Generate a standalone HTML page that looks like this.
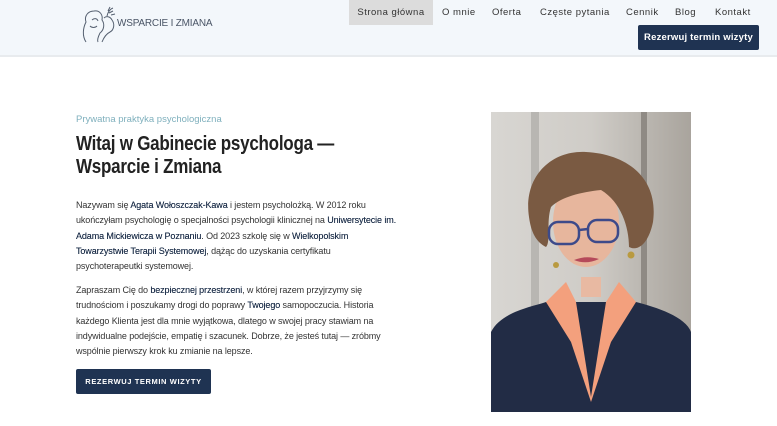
<!DOCTYPE html>
<html><head><meta charset="utf-8"><style>
*{margin:0;padding:0;box-sizing:border-box}
body{width:777px;height:426px;overflow:hidden;background:#fff;font-family:"Liberation Sans",sans-serif;position:relative}
.hdr{position:absolute;left:0;top:0;width:777px;height:57px;background:#f3f7fb;border-bottom:2px solid #e8ebee}
.logo{position:absolute;left:80px;top:6px}
.logotxt{position:absolute;left:117px;top:18px;font-size:10px;color:#4a5566;letter-spacing:-0.2px;white-space:nowrap}
.nav div{position:absolute;top:0;height:25px;line-height:25px;font-size:9.5px;color:#333;letter-spacing:0.5px;white-space:nowrap}
.nav .act{background:#dcdcdc;left:349px;width:84px;text-align:center}
.btn1{position:absolute;left:638px;top:25px;width:121px;height:25px;background:#1f3352;color:#fff;font-size:9.5px;font-weight:bold;border-radius:2px;text-align:center;line-height:25px;letter-spacing:0.2px;white-space:nowrap}
.sub{position:absolute;left:76px;top:114px;font-size:9.5px;color:#7fb0bd}
h1{position:absolute;left:76px;top:132px;font-size:20.5px;line-height:23px;color:#222;font-weight:bold;letter-spacing:-0.3px;transform:scaleX(0.83);transform-origin:left;white-space:nowrap}
.p{position:absolute;left:76px;font-size:9px;line-height:15.3px;color:#333;width:324px;letter-spacing:-0.1px}
.p b{font-weight:normal;color:#1d2f4a;text-shadow:0 0 .3px #1d2f4a}
.btn2{position:absolute;left:76px;top:369px;width:135px;height:25px;background:#1f3352;color:#fff;font-size:7.5px;font-weight:bold;letter-spacing:0.6px;text-align:center;line-height:25px;border-radius:2px}
.photo{position:absolute;left:491px;top:112px;width:200px;height:300px}
</style></head><body>
<div class="hdr">
<svg class="logo" width="40" height="38" viewBox="0 0 40 38" fill="none" stroke="#556070" stroke-width="1">
<path d="M6 36 C2 30 3 22 6 16 C4 10 8 5 14 5 C20 4 23 9 22 14 C25 18 24 24 20 27 C18 31 17 34 18 36"/>
<path d="M12 14 C14 12 17 12 18 15 M10 20 C12 22 15 22 17 20"/>
<path d="M22 36 C24 31 26 28 30 26 C34 24 35 18 32 14 C30 10 26 10 24 12"/>
<path d="M27 10 C28 6 30 3 33 2 M29 7 L33 5 M28 5 L30 1 M31 9 L35 8"/>
</svg>
<div class="logotxt">WSPARCIE I ZMIANA</div>
<div class="nav"><div class="act">Strona główna</div><div style="left:442px">O mnie</div><div style="left:492px">Oferta</div><div style="left:540px">Częste pytania</div><div style="left:626px">Cennik</div><div style="left:675px">Blog</div><div style="left:715px">Kontakt</div></div>
<div class="btn1">Rezerwuj termin wizyty</div>
</div>
<div class="sub">Prywatna praktyka psychologiczna</div>
<h1>Witaj w Gabinecie psychologa —<br>Wsparcie i Zmiana</h1>
<div class="p" style="top:198px">Nazywam się <b>Agata Wołoszczak-Kawa</b> i jestem psycholożką. W 2012 roku ukończyłam psychologię o specjalności psychologii klinicznej na <b>Uniwersytecie&nbsp;im.</b> <b>Adama Mickiewicza w Poznaniu</b>. Od 2023 szkolę się w <b>Wielkopolskim</b><br><b>Towarzystwie Terapii Systemowej</b>, dążąc do uzyskania certyfikatu<br>psychoterapeutki systemowej.</div>
<div class="p" style="top:283px">Zapraszam Cię do <b>bezpiecznej przestrzeni</b>, w której razem przyjrzymy się trudnościom i poszukamy drogi do poprawy <b>Twojego</b> samopoczucia. Historia każdego Klienta jest dla mnie wyjątkowa, dlatego w swojej pracy stawiam na indywidualne podejście, empatię i szacunek. Dobrze, że jesteś tutaj — zróbmy wspólnie pierwszy krok ku zmianie na lepsze.</div>
<div class="btn2">REZERWUJ TERMIN WIZYTY</div>
<svg class="photo" viewBox="0 0 200 300">
<defs><linearGradient id="bg" x1="0" x2="1"><stop offset="0" stop-color="#d8d6d2"/><stop offset=".5" stop-color="#cfccc7"/><stop offset="1" stop-color="#a9a49d"/></linearGradient></defs>
<rect width="200" height="300" fill="url(#bg)"/>
<rect x="40" y="0" width="8" height="200" fill="#b8b6b2"/><rect x="150" y="0" width="6" height="200" fill="#8f8a84"/>
<path d="M90 165 L90 185 L110 185 L110 165Z" fill="#e8b9a2"/>
<path d="M0 220 C10 200 40 195 55 190 L145 190 C165 195 195 205 200 220 L200 300 L0 300Z" fill="#222c45"/>
<path d="M55 190 L75 170 L85 190 L100 285 L115 190 L128 170 L145 190 L120 230 L100 290 L80 230Z" fill="#f3a07d"/>
<ellipse cx="95" cy="110" rx="33" ry="45" fill="#e7b69d"/>
<path d="M38 105 C32 65 60 38 95 40 C135 42 168 65 162 110 C158 130 148 140 138 135 C138 115 130 90 110 78 C90 80 70 85 60 95 C55 110 60 130 55 135 C45 130 40 120 38 105Z" fill="#7a5a42"/>
<g fill="none" stroke="#3d4a8a" stroke-width="2.5"><rect x="58" y="110" width="30" height="22" rx="9"/><rect x="97" y="108" width="30" height="22" rx="9"/><path d="M88 118 L97 117"/></g>
<path d="M83 148 Q95 153 108 147 Q95 143 83 148Z" fill="#b54a5a"/>
<circle cx="65" cy="153" r="3" fill="#b99a40"/><circle cx="140" cy="143" r="3.5" fill="#b99a40"/>
</svg>
</body></html>
